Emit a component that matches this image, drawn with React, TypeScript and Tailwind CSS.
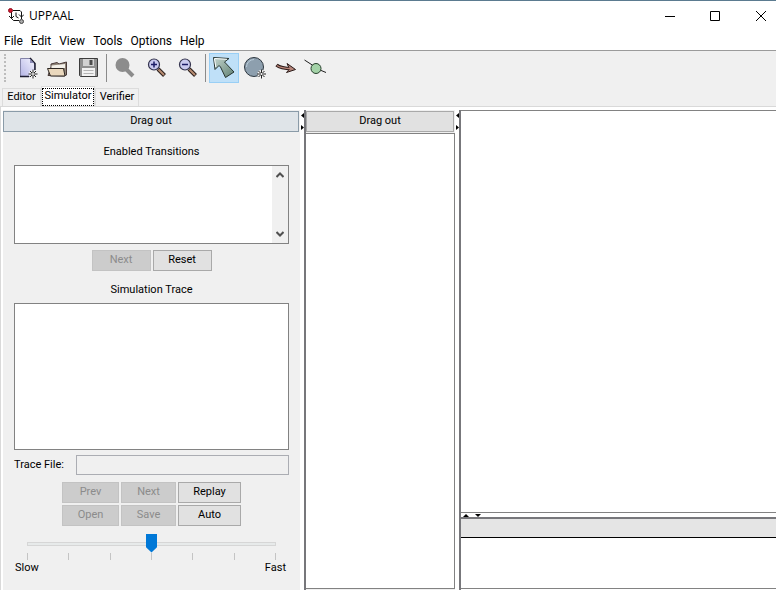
import type { ReactNode } from 'react';

const btn =
  'h-[21px] border border-[#a9a9a9] bg-[#e1e1e1] text-black disabled:border-[#c3c3c3] disabled:bg-[#cccccc] disabled:text-[#8b8b8b]';

const menus = ['File', 'Edit', 'View', 'Tools', 'Options', 'Help'];

function Sparkle({ x, y }: { x: number; y: number }) {
  return (
    <g transform={`translate(${x} ${y})`}>
      <circle r="4" fill="#f4f4f4" />
      <path d="M-4.5 0H4.5M0-4.5V4.5M-3-3L3 3M3-3L-3 3" stroke="#222" strokeWidth="1" />
      <circle r="1" fill="#fff" />
    </g>
  );
}

function Magnifier({ sign, disabled }: { sign?: 'plus' | 'minus'; disabled?: boolean }) {
  if (disabled) {
    return (
      <g>
        <path d="M16 16L23 23" stroke="#8c8c8c" strokeWidth="4" />
        <circle cx="12.5" cy="12" r="7" fill="#8c8c8c" />
      </g>
    );
  }
  return (
    <g>
      <path d="M17 16L23.5 22.5" stroke="#2b1f1c" strokeWidth="4" />
      <path d="M17.5 16.5L23 22" stroke="#b98d72" strokeWidth="2" />
      <circle cx="13" cy="11.5" r="5.5" fill="#c9c9ee" stroke="#33334d" strokeWidth="1.2" />
      <path d={sign === 'plus' ? 'M10 11.5H16M13 8.5V14.5' : 'M10 11.5H16'} stroke="#1c1c66" strokeWidth="1.5" />
    </g>
  );
}

interface ToolProps {
  label: string;
  active?: boolean;
  disabled?: boolean;
  children: ReactNode;
}

function Tool({ label, active, disabled, children }: ToolProps) {
  return (
    <button
      type="button"
      aria-label={label}
      disabled={disabled}
      className={`size-[30px] shrink-0 ${active ? 'bg-[#bfe0f8] outline outline-1 -outline-offset-1 outline-[#99cff5]' : ''}`}
    >
      <svg viewBox="0 0 30 30" className="size-[30px]" fill="none">
        {children}
      </svg>
    </button>
  );
}

function Separator() {
  return <div className="mr-[3px] ml-[3px] h-7 w-px bg-[#8a8a8a]" />;
}

function Toolbar() {
  return (
    <div role="toolbar" className="flex items-center border-t border-[#9b9b9b] bg-[#f0f0f0] pt-0.5 pb-[3px] pl-1">
      <div className="mr-[7px] h-7 border-l-2 border-dotted border-[#bcbcbc]" />
      <Tool label="New">
        <defs>
          <linearGradient id="page" x1="1" y1="0" x2="0" y2="1">
            <stop offset="0" stopColor="#f4f4ff" />
            <stop offset="1" stopColor="#b4b4e4" />
          </linearGradient>
        </defs>
        <path d="M7.5 5.5H17.5L21.5 10V23.5H7.5Z" fill="url(#page)" stroke="#8484a8" />
        <path d="M17 5L22 10.5V17M7 23.5H16" stroke="#1d1d30" strokeWidth="1.5" />
        <path d="M17 6V10H21Z" fill="#8d8db8" />
        <Sparkle x={20} y={21} />
      </Tool>
      <Tool label="Open">
        <path d="M8 14V11L14 9.5L16 11L23.5 9V22L21 23L5 22.5Z" fill="#8f8478" stroke="#4a3a38" />
        <path d="M8.5 12.5L22 11V15H8.5Z" fill="#f4f1ea" />
        <path d="M4.5 15.5H20.5L22 23H7.5Z" fill="#ead8bd" stroke="#2d2723" />
      </Tool>
      <Tool label="Save">
        <path d="M6.5 5.5H24.5V23.5H7.5L6.5 22.5Z" fill="#909090" stroke="#3c3c3c" />
        <path d="M10 6H21V13H10Z" fill="#d2d2d2" />
        <path d="M16.5 7H19.5V12H16.5Z" fill="#4d4d4d" />
        <path d="M9 15H22V23H9Z" fill="#f2f2f2" />
        <path d="M10.5 17.5H20.5M10.5 20.5H20.5" stroke="#b5b5b5" />
      </Tool>
      <Separator />
      <div className="flex gap-px">
        <Tool label="Zoom to fit" disabled>
          <Magnifier disabled />
        </Tool>
        <Tool label="Zoom in">
          <Magnifier sign="plus" />
        </Tool>
        <Tool label="Zoom out">
          <Magnifier sign="minus" />
        </Tool>
      </div>
      <Separator />
      <div className="flex gap-px">
        <Tool label="Select" active>
          <defs>
            <linearGradient id="arrow" x1="0" y1="0" x2="1" y2="1">
              <stop offset="0" stopColor="#c5d6cf" />
              <stop offset="1" stopColor="#5f8073" />
            </linearGradient>
          </defs>
          <path d="M4.5 4.5L20 5.5L15.500 9L25 19L16.500 24.5L11.500 14L10 12.500L6 16.500Z" fill="url(#arrow)" stroke="#26332f" />
          <path d="M5.5 5.5L18 6.300M5.5 6L6.800 14" stroke="#fff" />
        </Tool>
        <Tool label="Add location">
          <circle cx="14" cy="14" r="9.5" fill="#8d9fae" stroke="#2d3740" />
          <path d="M6.5 14A7.5 7.5 0 0 1 14 6.5" stroke="#b9cbd8" />
          <Sparkle x={21.5} y={21} />
        </Tool>
        <Tool label="Add edge">
          <path d="M5.5 12C9 15 14 15.5 21 15.5" stroke="#2c1b18" strokeWidth="3.5" />
          <path d="M16 10.5L24.5 16.5L15.5 19.5L18.5 16Z" fill="#b0837a" stroke="#2c1b18" />
          <path d="M6 12.5C9 15 14 15.5 21 15.8" stroke="#b98478" strokeWidth="1.5" />
        </Tool>
        <Tool label="Add nail">
          <path d="M2.5 7L11 12.5M18 17L24 19.5" stroke="#1f1f1f" />
          <circle cx="14" cy="15.5" r="5" fill="#a4d3a8" stroke="#26402b" />
        </Tool>
      </div>
    </div>
  );
}

function Tabs() {
  return (
    <div role="tablist" className="flex items-end bg-[#f0f0f0] pl-0.5">
      <button type="button" role="tab" aria-selected="false" className="h-[18px] w-[39px] border border-b-0 border-[#dcdcdc]">
        Editor
      </button>
      <button type="button" role="tab" aria-selected="true" className="h-5 w-[54px] border border-b-0 border-[#dcdcdc] bg-white">
        <span className="flex h-[18px] items-center justify-center border border-dotted border-black pb-px">Simulator</span>
      </button>
      <button type="button" role="tab" aria-selected="false" className="h-[18px] w-11 border border-b-0 border-[#dcdcdc]">
        Verifier
      </button>
    </div>
  );
}

// Split pane handle with its two collapse arrows
function VerticalDivider() {
  return (
    <div className="flex w-1.5 shrink-0 flex-col items-center gap-[7px] border-r-2 border-[#77777b] bg-white pt-[3px]">
      <svg viewBox="0 0 3 5" className="h-[5px] w-[3px]">
        <path d="M3 0V5L0 2.5Z" />
      </svg>
      <svg viewBox="0 0 3 5" className="h-[5px] w-[3px]">
        <path d="M0 0V5L3 2.5Z" />
      </svg>
    </div>
  );
}

function ControlPanel() {
  return (
    <section className="flex w-[297px] shrink-0 flex-col bg-[#f0f0f0] pt-px">
      <button type="button" className="mr-px h-[21px] border border-[#8a9ba8] bg-[#dfe4e8]">
        Drag out
      </button>
      <div className="flex flex-col px-[11px] pt-3">
        <h2 className="text-center leading-4">Enabled Transitions</h2>
        <div className="mt-[5px] flex h-[79px] justify-end border border-[#828282] bg-white">
          <div className="flex w-4 flex-col items-center justify-between bg-[#f0f0f0] py-1.5">
            <svg viewBox="0 0 8 6" className="h-1.5 w-2" fill="none" stroke="#505050" strokeWidth="2">
              <path d="M0.5 5L4 1.5L7.5 5" />
            </svg>
            <svg viewBox="0 0 8 6" className="h-1.5 w-2" fill="none" stroke="#505050" strokeWidth="2">
              <path d="M0.5 1L4 4.5L7.5 1" />
            </svg>
          </div>
        </div>
        <div className="mt-1.5 flex justify-center gap-0.5">
          <button type="button" disabled className={`w-[59px] ${btn}`}>Next</button>
          <button type="button" className={`w-[59px] ${btn}`}>Reset</button>
        </div>
        <h2 className="mt-[11px] text-center leading-4">Simulation Trace</h2>
        <div className="mt-[5px] h-[147px] border border-[#828282] bg-white" />
        <div className="mt-[5px] flex items-center">
          <label htmlFor="trace-file" className="w-[62px] shrink-0">Trace File:</label>
          <input id="trace-file" type="text" readOnly className="h-5 min-w-0 flex-1 border border-[#abadb3] bg-[#f0f0f0] px-1" />
        </div>
        <div className="mt-[7px] grid grid-cols-[57px_55px_63px] justify-center gap-0.5">
          <button type="button" disabled className={btn}>Prev</button>
          <button type="button" disabled className={btn}>Next</button>
          <button type="button" className={btn}>Replay</button>
          <button type="button" disabled className={btn}>Open</button>
          <button type="button" disabled className={btn}>Save</button>
          <button type="button" className={btn}>Auto</button>
        </div>
        <div className="mt-2 px-[13px]">
          <input
            type="range"
            aria-label="Simulation speed"
            min={0}
            max={6}
            defaultValue={3}
            className="block h-[19px] w-full appearance-none bg-transparent [&::-webkit-slider-runnable-track]:h-1 [&::-webkit-slider-runnable-track]:border [&::-webkit-slider-runnable-track]:border-[#d6d6d6] [&::-webkit-slider-runnable-track]:bg-[#e7eaea] [&::-webkit-slider-thumb]:-mt-[9px] [&::-webkit-slider-thumb]:h-[19px] [&::-webkit-slider-thumb]:w-[11px] [&::-webkit-slider-thumb]:appearance-none [&::-webkit-slider-thumb]:bg-[#0078d7] [&::-webkit-slider-thumb]:[clip-path:polygon(0_0,100%_0,100%_72%,50%_100%,0_72%)]"
          />
          <div className="flex justify-between">
            {[0, 1, 2, 3, 4, 5, 6].map((tick) => (
              <span key={tick} className="h-[7px] w-px bg-[#c4c4c4]" />
            ))}
          </div>
        </div>
        <div className="flex justify-between pr-[3px] pl-px leading-4">
          <span>Slow</span>
          <span>Fast</span>
        </div>
      </div>
    </section>
  );
}

function App() {
  return (
    <div className="flex min-h-screen flex-col border-t border-[#5b7b90] bg-white font-['Roboto','Open_Sans',sans-serif] text-[11px] text-black">
      <header className="flex h-[30px] items-center pl-2 text-[12px]">
        <svg viewBox="0 0 16 16" className="size-4" fill="none" stroke="#111">
          <path d="M3.5 4V10.5L5.5 12.5H11M5 2.5H12L13.5 4V11M1 8L3.5 10.5L6 8M11 6.5L13.5 9L16 6.5M8 4.5V8.5L10.5 10" />
          <circle cx="2.5" cy="2.5" r="2" fill="#d8142c" stroke="#8d1020" />
          <circle cx="13.5" cy="13.5" r="2" fill="#aaa" stroke="#444" />
        </svg>
        <h1 className="ml-[5px] flex-1 font-['Open_Sans',sans-serif]">UPPAAL</h1>
        <button type="button" aria-label="Minimize" className="w-[46px]">
          <svg viewBox="0 0 10 10" className="mx-auto size-2.5" stroke="#000">
            <path d="M0 5.5H10" />
          </svg>
        </button>
        <button type="button" aria-label="Maximize" className="w-11">
          <svg viewBox="0 0 10 10" className="mx-auto size-2.5" stroke="#000" fill="none">
            <path d="M0.5 0.5H9.5V9.5H0.5Z" />
          </svg>
        </button>
        <button type="button" aria-label="Close" className="w-[39px] pl-2">
          <svg viewBox="0 0 10 10" className="mx-auto size-2.5" stroke="#000">
            <path d="M0 0L10 10M10 0L0 10" />
          </svg>
        </button>
      </header>
      <nav className="flex h-[19px] items-center gap-2 pl-1 text-[12px]">
        {menus.map((menu) => (
          <button key={menu} type="button">{menu}</button>
        ))}
      </nav>
      <Toolbar />
      <Tabs />
      <main className="flex flex-1 border-t border-l border-[#d9d9d9] bg-white pt-[3px] pl-0.5">
        <ControlPanel />
        <VerticalDivider />
        <section className="flex w-[149px] shrink-0 flex-col bg-[#f0f0f0] pt-px">
          <button type="button" className="mr-px h-[21px] border border-[#a9a9a9] bg-[#e1e1e1]">
            Drag out
          </button>
          <div className="mt-px mb-px flex-1 border border-l-0 border-[#828282] bg-white" />
        </section>
        <VerticalDivider />
        <section className="flex min-w-0 flex-1 flex-col">
          <div className="flex-1 border-y border-[#828282] bg-white" />
          <div className="flex h-1.5 items-center gap-1.5 border-b-2 border-[#77777b] pl-0.5">
            <svg viewBox="0 0 6 3" className="h-[3px] w-1.5">
              <path d="M0 3H6L3 0Z" />
            </svg>
            <svg viewBox="0 0 6 3" className="h-[3px] w-1.5">
              <path d="M0 0H6L3 3Z" />
            </svg>
          </div>
          <div className="h-[18px] bg-[#e5e5e5]" />
          <div className="mb-px h-[52px] border-t border-b border-t-black border-b-[#828282] bg-white" />
        </section>
      </main>
    </div>
  );
}

export default App;
